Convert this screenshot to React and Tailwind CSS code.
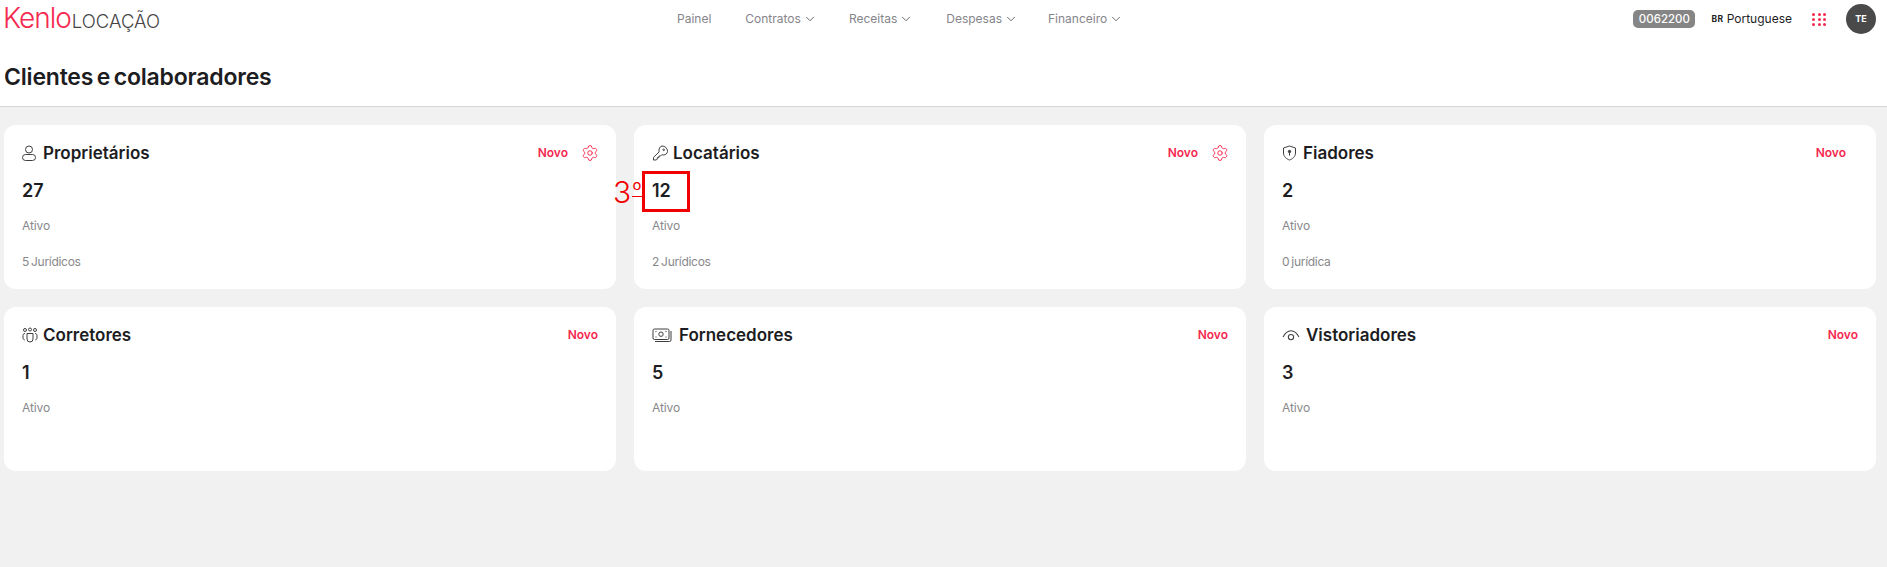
import { ChevronDown, Settings } from "lucide-react";

const font = "font-['Inter','Liberation_Sans',sans-serif]";

// small outline icons for the card titles
function OwnerIcon() {
  return (
    <svg width="14" height="16" viewBox="0 0 14 16" fill="none" stroke="#3f3f3f" strokeWidth="1">
      <circle cx="7" cy="4.500" r="3.500" />
      <rect x=".5" y="9.500" width="13" height="6" rx="3" />
    </svg>
  );
}

function KeyIcon() {
  return (
    <svg width="17" height="16" viewBox="0 0 16 16" fill="none" stroke="#3f3f3f" strokeWidth="1">
      <path d="M9.500 1a5.300 5.300 0 0 1 5.500 5.500c-.2 2-2 3.500-4 3.500-.6 0-1.200-.1-1.700-.3L8 11H6.400v1.600H4.800V14l-1 1H1v-2.600l5.600-5.500C6 4 7.500 1.200 9.500 1z" />
      <circle cx="11.200" cy="4.800" r=".8" />
    </svg>
  );
}

function ShieldIcon() {
  return (
    <svg width="15" height="16" viewBox="0 0 15 16" fill="none" stroke="#3f3f3f" strokeWidth="1">
      <path d="M7.500 1 L13.500 3 V8 C13.500 11.500 10.500 14 7.500 15 C4.500 14 1.500 11.500 1.500 8 V3 Z" />
      <circle cx="7.500" cy="6.500" r="1.200" fill="#3f3f3f" />
      <path d="M7.500 7.500v3" />
    </svg>
  );
}

function TeamIcon() {
  return (
    <svg width="16" height="16" viewBox="0 0 16 16" fill="none" stroke="#3f3f3f" strokeWidth="1">
      <circle cx="3" cy="3" r="1.500" />
      <circle cx="8" cy="2.500" r="1.500" />
      <circle cx="13" cy="3" r="1.500" />
      <path d="M5 6.500h6v5.500a3 3 0 0 1-6 0z" />
      <path d="M3 6.500C1.500 6.500 1 7.500 1 8.500v2.500c0 1 .7 1.700 1.800 2" />
      <path d="M13 6.500c1.500 0 2 1 2 2v2.500c0 1-.7 1.700-1.800 2" />
    </svg>
  );
}

function MoneyIcon() {
  return (
    <svg width="20" height="16" viewBox="0 0 20 16" fill="none" stroke="#3f3f3f" strokeWidth="1">
      <rect x="1" y="2" width="16" height="10.500" rx="1.500" />
      <circle cx="9" cy="7.200" r="2.200" />
      <path d="M3.500 4.500h1M3.500 10h1M13.500 4.500h1M13.500 10h1" />
      <path d="M19 4v9a1.500 1.500 0 0 1-1.500 1.500H3" />
    </svg>
  );
}

function EyeIcon() {
  return (
    <svg width="18" height="13" viewBox="0 0 17 12" fill="none" stroke="#3f3f3f" strokeWidth="1">
      <path d="M1 7.500C3 3.500 5.500 1.500 8.500 1.500s5.500 2 7.500 6" />
      <circle cx="8.500" cy="7.500" r="2.500" />
    </svg>
  );
}

function Card({ icon, iconWidth = "w-[21px]", title, count, extra, gear, marked, novoClass = "" }) {
  return (
    <div className="h-[164px] rounded-xl bg-white px-[18px] pt-[16px]">
      <div className="flex h-[24px] items-center">
        <span className={`flex shrink-0 items-center ${iconWidth}`}>{icon}</span>
        <h2 className="text-[17px] leading-6 font-semibold text-[#1d1d1f]">{title}</h2>
        <div className="ml-auto flex items-center">
          <span className={`text-[12px] font-semibold text-[#f5294f] ${novoClass}`}>Novo</span>
          {gear ? (
            <Settings size={18} strokeWidth={1.25} className="mr-[-1px] ml-[13px] text-[#f5294f]" />
          ) : null}
        </div>
      </div>
      <div className="relative mt-[14px] h-[24px] text-[18px] leading-6 font-semibold text-[#1d1d1f]">
        {count}
        {marked ? (
          <>
            <span className="absolute top-[-8px] left-[-10px] h-[41px] w-[48px] border-[3px] border-[#f00000]" />
            <span className="absolute top-[-5px] left-[-39px] flex items-start text-[30px] leading-[36px] font-light text-[#f00000]">
              3
              <span className="ml-[1px] h-[23px] border-b border-[#f00000] text-[22px] leading-[32px]">º</span>
            </span>
          </>
        ) : null}
      </div>
      <p className="mt-[13px] h-[20px] text-[12px] leading-5 tracking-[-0.1px] text-[#88888a]">Ativo</p>
      {extra ? (
        <p className="mt-[16px] h-[20px] text-[12px] leading-5 tracking-[-0.3px] text-[#88888a] [word-spacing:-1px]">
          {extra}
        </p>
      ) : null}
    </div>
  );
}

const menu = [
  { label: "Contratos", ml: "ml-[34px]" },
  { label: "Receitas", ml: "ml-[32px]" },
  { label: "Despesas", ml: "ml-[33px]" },
  { label: "Financeiro", ml: "ml-[30px]" },
];

const dots = [0, 1, 2, 3, 4, 5, 6, 7, 8];

export default function App() {
  return (
    <div className={`${font} min-h-[567px] bg-[#f1f1f1]`}>
      {/* Header */}
      <header className="border-b border-[#d4d4d4] bg-white">
        <div className="flex h-[38px] items-center pr-[11px] pl-[4px]">
          <div className="flex w-[673px] items-baseline">
            <span className="ml-[-1px] text-[28px] leading-7 font-light tracking-[-1px] text-[#f5294f]">Kenlo</span>
            <span className="ml-[1px] text-[18.500px] leading-7 font-light text-[#444]">LOCAÇÃO</span>
          </div>
          <nav className="flex items-center text-[12px] text-[#85858a]">
            <span>Painel</span>
            {menu.map((item) => (
              <span key={item.label} className={`flex items-center ${item.ml}`}>
                {item.label}
                <ChevronDown size={14} strokeWidth={1.5} className="ml-[2px] text-[#555]" />
              </span>
            ))}
          </nav>
          <div className="ml-auto flex items-center">
            <span className="rounded-[5px] bg-[#858585] px-[5.500px] text-[11.500px] leading-[18px] font-medium text-white">
              0062200
            </span>
            <span className="ml-[16px] text-[8.500px] font-bold tracking-[0.5px] text-[#222]">BR</span>
            <span className="ml-[3px] text-[12px] text-[#1d1d1f]">Portuguese</span>
            <div className="ml-[20px] grid grid-cols-3 gap-x-[2.500px] gap-y-[2px]">
              {dots.map((d) => (
                <span key={d} className="h-[3px] w-[3px] rounded-full bg-[#f5294f]" />
              ))}
            </div>
            <span className="ml-[20px] flex h-[30px] w-[30px] items-center justify-center rounded-full bg-[#4a4a4a] text-[9px] font-bold text-white">
              TE
            </span>
          </div>
        </div>
        <h1 className="h-[68px] pt-[23px] pl-[4px] text-[23px] leading-8 font-semibold tracking-[-0.2px] text-[#1d1d1f] [word-spacing:-2px]">
          Clientes e colaboradores
        </h1>
      </header>

      {/* Cards */}
      <main className="grid grid-cols-3 gap-[18px] pt-[18px] pr-[11px] pl-[4px]">
        <Card icon={<OwnerIcon />} title="Proprietários" count="27" extra="5 Jurídicos" gear />
        <Card icon={<KeyIcon />} title="Locatários" count="12" extra="2 Jurídicos" gear marked />
        <Card icon={<ShieldIcon />} title="Fiadores" count="2" extra="0 jurídica" novoClass="mr-[12px]" />
        <Card icon={<TeamIcon />} title="Corretores" count="1" />
        <Card icon={<MoneyIcon />} iconWidth="w-[27px]" title="Fornecedores" count="5" />
        <Card icon={<EyeIcon />} iconWidth="w-[24px]" title="Vistoriadores" count="3" />
      </main>
    </div>
  );
}
